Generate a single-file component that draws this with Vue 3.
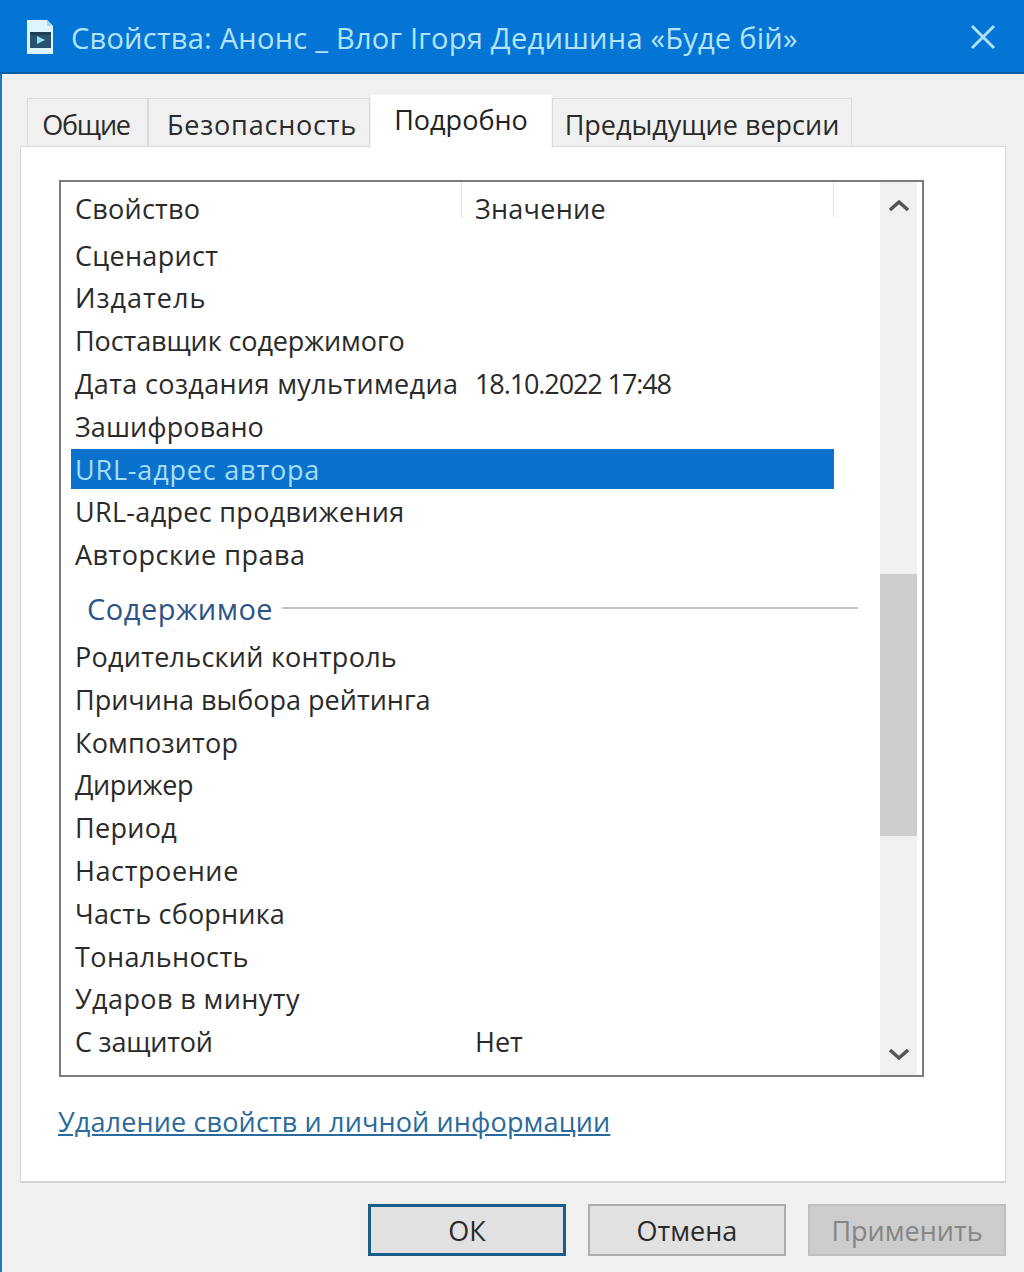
<template>
  <div class="window">
    <header class="titlebar">
      <svg class="file-icon" viewBox="0 0 30 36" width="30" height="36">
        <path d="M2 1h20l6 6v28H2z" fill="#dff5fd" />
        <path d="M22 1l6 6h-6z" fill="#a5d9f2" />
        <rect x="5" y="13" width="21" height="16" fill="#28536e" />
        <rect x="5" y="13" width="21" height="3" fill="#1d3f57" />
        <path d="M12 17l8 4-8 4z" fill="#9ddcf8" />
      </svg>
      <span class="title">{{ title }}</span>
      <svg class="close" viewBox="0 0 26 26" width="26" height="26">
        <path d="M2 2l22 22M24 2L2 24" stroke="#aee0fa" stroke-width="3" fill="none" />
      </svg>
    </header>

    <div class="body">
      <nav class="tabs">
        <span
          v-for="tab in tabs"
          :key="tab.label"
          class="tab"
          :class="{ active: tab.active }"
          :style="{ width: tab.width + 'px', letterSpacing: tab.ls + 'px', textIndent: tab.indent + 'px' }"
        >{{ tab.label }}</span>
      </nav>

      <section class="panel">
        <div class="listbox">
          <div class="list">
            <div class="row head">
              <span class="name">Свойство</span>
              <span class="value">Значение</span>
            </div>
            <template v-for="row in rows" :key="row.name">
              <div v-if="row.group" class="group">
                <span>{{ row.name }}</span>
                <i></i>
              </div>
              <div v-else class="row" :class="{ selected: row.selected }">
                <span class="name" :style="{ letterSpacing: row.ls + 'px' }">{{ row.name }}</span>
                <span class="value" :class="{ date: row.name.startsWith('Дата') }">{{ row.value }}</span>
              </div>
            </template>
          </div>
          <div class="scrollbar">
            <svg viewBox="0 0 20 12" width="20" height="12">
              <path d="M1 10l9-8 9 8" stroke="#555" stroke-width="3.4" fill="none" />
            </svg>
            <div class="track"><div class="thumb"></div></div>
            <svg viewBox="0 0 20 12" width="20" height="12">
              <path d="M1 2l9 8 9-8" stroke="#555" stroke-width="3.4" fill="none" />
            </svg>
          </div>
        </div>
        <a class="link">Удаление свойств и личной информации</a>
      </section>

      <footer class="buttons">
        <button class="btn primary">ОК</button>
        <button class="btn">Отмена</button>
        <button class="btn disabled">Применить</button>
      </footer>
    </div>
  </div>
</template>

<script setup>
const title = 'Свойства: Анонс _ Влог Ігоря Дедишина «Буде бій»'

const tabs = [
  { label: 'Общие', width: 121, ls: -1.2, indent: -3 },
  { label: 'Безопасность', width: 222, ls: 0.8, indent: 6 },
  { label: 'Подробно', width: 182, ls: 0, indent: 0, active: true },
  { label: 'Предыдущие версии', width: 300, ls: 0, indent: 0 },
]

// ls: per-row letter spacing, the original font runs a little wider or narrower here and there
const rows = [
  { name: 'Сценарист', ls: 0.3 },
  { name: 'Издатель', ls: 1 },
  { name: 'Поставщик содержимого', ls: -0.1 },
  { name: 'Дата создания мультимедиа', value: '18.10.2022 17:48', ls: 0.36 },
  { name: 'Зашифровано', ls: 0.1 },
  { name: 'URL-адрес автора', selected: true, ls: 0.8 },
  { name: 'URL-адрес продвижения', ls: 0.3 },
  { name: 'Авторские права', ls: 0.5 },
  { name: 'Содержимое', group: true },
  { name: 'Родительский контроль', ls: 0.25 },
  { name: 'Причина выбора рейтинга', ls: 0 },
  { name: 'Композитор', ls: 0.2 },
  { name: 'Дирижер', ls: -0.4 },
  { name: 'Период', ls: 0.3 },
  { name: 'Настроение', ls: 0.6 },
  { name: 'Часть сборника', ls: 0.2 },
  { name: 'Тональность', ls: 0.4 },
  { name: 'Ударов в минуту', ls: 0.4 },
  { name: 'С защитой', ls: -0.2, value: 'Нет' },
]
</script>

<style>
html, body { margin: 0; background: #f0f0f0; }
</style>

<style scoped>
.window {
  width: 1024px;
  height: 1272px;
  overflow: hidden;
  display: flex;
  flex-direction: column;
  font-family: 'Open Sans', 'Noto Sans', sans-serif;
  font-size: 27px;
  color: #2a2a2a;
  background: #f0f0f0;
}

.titlebar {
  height: 74px;
  flex-shrink: 0;
  display: flex;
  align-items: center;
  padding: 2px 28px 0 25px;
  box-sizing: border-box;
  background: #0475d4;
  border-bottom: 2px solid #0a5ea8;
}
.file-icon { margin-right: 16px; flex-shrink: 0; }
.title { color: #b5e3fa; font-size: 29px; flex: 1; white-space: nowrap; letter-spacing: 0.25px; }
.close { flex-shrink: 0; }

.body {
  flex: 1;
  display: flex;
  flex-direction: column;
  border-left: 2px solid #1c78c4;
  padding: 0 18px;
}

.tabs {
  height: 72px;
  flex-shrink: 0;
  display: flex;
  align-items: flex-end;
  padding-left: 7px;
  box-sizing: border-box;
}
.tab {
  height: 48px;
  line-height: 52px;
  box-sizing: border-box;
  text-align: center;
  background: #f0f0f0;
  border: 1px solid #dadada;
  border-bottom: 0;
  white-space: nowrap;
}
.tab.active {
  height: 53px;
  line-height: 50px;
  background: #fff;
  border-color: #f4f4f4;
  position: relative;
  top: 1px;
  color: #222;
}

.panel {
  height: 1037px;
  flex-shrink: 0;
  box-sizing: border-box;
  background: #fff;
  border: 1px solid #d9d9d9;
  border-bottom: 2px solid #d4d4d4;
  padding: 33px 0 0 38px;
}

.listbox {
  width: 865px;
  height: 897px;
  box-sizing: border-box;
  display: flex;
  border: 2px solid #7c7c7c;
  overflow: hidden;
}

.list { width: 819px; flex-shrink: 0; }

.row {
  display: flex;
  height: 42.8px;
  line-height: 42.8px;
  width: 763px;
  margin-left: 10px;
  padding-left: 4px;
  box-sizing: border-box;
  white-space: nowrap;
}
.row .name { width: 400px; flex-shrink: 0; }
.row .value.date { letter-spacing: -1.1px; }
.row.head { height: 53.6px; line-height: 53px; letter-spacing: 0.25px; margin-top: -1px; padding-top: 1px; }
.row.head .name { border-right: 1px solid #e4e4e4; height: 36px; width: 386px; margin-right: 13px; }
.row.head .value { border-right: 1px solid #e4e4e4; height: 36px; flex: 1; }
.row.selected {
  background: linear-gradient(#0a72cc, #0a72cc) no-repeat top / 100% 40px;
  color: #a5defa;
}

.group {
  height: 59px;
  padding-top: 4px;
  box-sizing: border-box;
  margin-left: 26px;
  margin-right: 22px;
  display: flex;
  align-items: center;
  gap: 9px;
  color: #2d5486;
  font-size: 29px;
  letter-spacing: 0.5px;
}
.group i { flex: 1; height: 2px; background: #bcc3cb; }

.scrollbar {
  width: 37px;
  flex-shrink: 0;
  display: flex;
  flex-direction: column;
  align-items: center;
  background: #f0f0f0;
  padding: 18px 0 15px;
  box-sizing: border-box;
}
.track { flex: 1; width: 100%; padding-top: 362px; box-sizing: border-box; }
.thumb { height: 262px; background: #cdcdcd; }

.link {
  display: inline-block;
  margin: 26px 0 0 -1px;
  color: #2a6a9c;
  text-decoration: underline;
  font-size: 27px;
  letter-spacing: 0.14px;
}

.buttons {
  flex: 1;
  display: flex;
  justify-content: flex-end;
  gap: 22px;
  padding-top: 21px;
}
.btn {
  width: 198px;
  height: 52px;
  box-sizing: border-box;
  font: inherit;
  color: #2a2a2a;
  background: #e1e1e1;
  border: 2px solid #adadad;
  padding: 0;
}
.btn.primary { border: 3px solid #1a5e88; }
.btn.disabled { background: #cccccc; border-color: #bfbfbf; color: #858585; }
</style>
